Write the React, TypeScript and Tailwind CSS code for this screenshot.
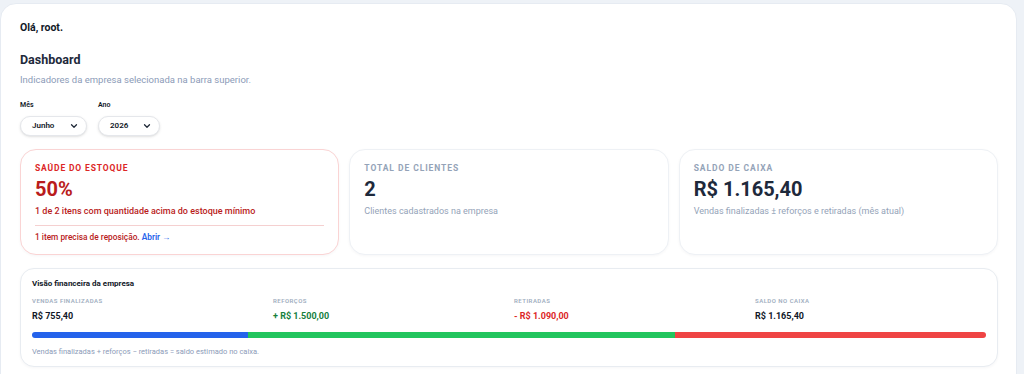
import React from "react";
import { ChevronDown } from "lucide-react";

const font = { fontFamily: "Roboto, 'Liberation Sans', sans-serif" };

function Select({ value, width }: { value: string; width: string }) {
  return (
    <div
      className={`${width} h-[20px] flex items-center justify-between rounded-full border border-[#e5e7eb] bg-white pl-[11px] pr-[7px] shadow-sm`}
    >
      <span className="text-[8px] font-semibold text-[#111827]">{value}</span>
      <ChevronDown className="w-[10px] h-[10px] text-[#1f2937]" strokeWidth={3} />
    </div>
  );
}

function StatCard({ title, value, desc }: { title: string; value: string; desc: string }) {
  return (
    <div className="flex-1 h-[106px] rounded-[16px] border border-[#eef1f5] bg-white px-[14px] pt-[12px] shadow-[0_1px_3px_rgba(15,23,42,0.04)]">
      <p className="text-[8.5px] font-bold uppercase tracking-[0.11em] text-[#94a3b8]">{title}</p>
      <p className="mt-[1px] text-[20px] font-bold leading-[26px] text-[#1e293b]">{value}</p>
      <p className="mt-[3px] text-[9px] text-[#94a3b8]">{desc}</p>
    </div>
  );
}

function Metric({ label, value, color }: { label: string; value: string; color: string }) {
  return (
    <div>
      <p className="text-[6px] font-semibold uppercase tracking-[0.08em] text-[#a0aec0]">{label}</p>
      <p className={`mt-[5px] text-[9px] font-bold ${color}`}>{value}</p>
    </div>
  );
}

export default function App() {
  return (
    <div className="h-[374px] overflow-hidden bg-[#eef2f7] pt-[3px] pr-[7px]" style={font}>
      <div className="h-[400px] rounded-tl-[16px] rounded-tr-[16px] border border-[#e6ebf2] bg-white pl-[19px] pr-[18px] pt-[16px]">
        <p className="text-[10.5px] font-bold text-[#111827]">Olá, root.</p>

        <h1 className="mt-[15px] text-[12.5px] font-bold text-[#1e293b]">Dashboard</h1>
        <p className="mt-[3px] text-[9.5px] text-[#8c9bb8]">Indicadores da empresa selecionada na barra superior.</p>

        <div className="mt-[13px] flex gap-[11px]">
          <div>
            <p className="text-[7px] font-semibold text-[#111827]">Mês</p>
            <div className="mt-[6px]">
              <Select value="Junho" width="w-[67px]" />
            </div>
          </div>
          <div>
            <p className="text-[7px] font-semibold text-[#111827]">Ano</p>
            <div className="mt-[6px]">
              <Select value="2026" width="w-[62px]" />
            </div>
          </div>
        </div>

        <div className="mt-[13px] flex gap-[10px]">
          <div className="flex-1 h-[106px] rounded-[16px] border border-[#fad4d4] bg-white px-[14px] pt-[12px] shadow-[0_1px_3px_rgba(15,23,42,0.04)]">
            <p className="text-[8.5px] font-bold uppercase tracking-[0.1em] text-[#dc2626]">Saúde do estoque</p>
            <p className="mt-[1px] text-[20px] font-bold leading-[26px] text-[#b91c1c]">50%</p>
            <p className="mt-[3px] text-[9px] font-medium text-[#b91c1c]">1 de 2 itens com quantidade acima do estoque mínimo</p>
            <div className="mt-[6px] border-t border-[#f5d0d0]" />
            <p className="mt-[5px] text-[8.3px] font-medium text-[#b91c1c]">
              1 item precisa de reposição.{" "}
              <span className="font-semibold text-[#2563eb]">Abrir →</span>
            </p>
          </div>
          <StatCard title="Total de clientes" value="2" desc="Clientes cadastrados na empresa" />
          <StatCard
            title="Saldo de caixa"
            value="R$ 1.165,40"
            desc="Vendas finalizadas ± reforços e retiradas (mês atual)"
          />
        </div>

        <div className="mt-[13px] h-[99px] rounded-[14px] border border-[#e8ecf1] bg-white px-[11px] pt-[9px] shadow-[0_1px_3px_rgba(15,23,42,0.04)]">
          <p className="text-[8px] font-bold text-[#111827]">Visão financeira da empresa</p>
          <div className="mt-[6px] grid grid-cols-4 gap-[10px]">
            <Metric label="Vendas finalizadas" value="R$ 755,40" color="text-[#111827]" />
            <Metric label="Reforços" value="+ R$ 1.500,00" color="text-[#15803d]" />
            <Metric label="Retiradas" value="- R$ 1.090,00" color="text-[#dc2626]" />
            <Metric label="Saldo no caixa" value="R$ 1.165,40" color="text-[#111827]" />
          </div>
          <div className="mt-[8px] flex h-[6px] overflow-hidden rounded-full">
            <div className="w-[22.6%] bg-[#2563eb]" />
            <div className="w-[44.8%] bg-[#22c55e]" />
            <div className="flex-1 bg-[#ef4444]" />
          </div>
          <p className="mt-[8px] text-[7.5px] text-[#8c9bb8]">Vendas finalizadas + reforços − retiradas = saldo estimado no caixa.</p>
        </div>
      </div>
    </div>
  );
}
